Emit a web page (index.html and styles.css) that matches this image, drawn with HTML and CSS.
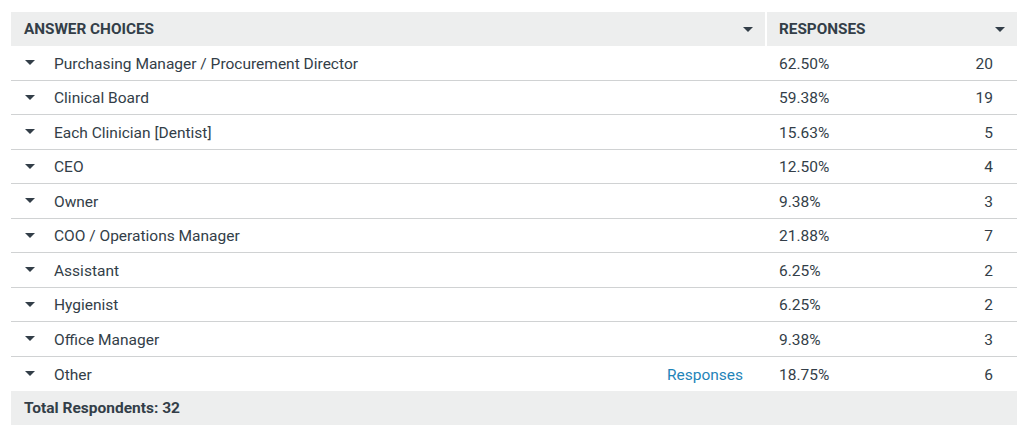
FILE: index.html
```html
<!DOCTYPE html>
<html>
<head>
<meta charset="utf-8">
<link rel="stylesheet" href="styles.css">
</head>
<body>
<div class="tbl">
  <div class="row head">
    <div class="c-choice"><span>ANSWER CHOICES</span><span class="hcaret"></span></div>
    <div class="c-resp"><span>RESPONSES</span><span class="hcaret"></span></div>
  </div>
  <div class="row item"><div class="c-choice"><span class="caret"></span><span class="lbl">Purchasing Manager / Procurement Director</span></div><div class="c-pct">62.50%</div><div class="c-num">20</div></div>
  <div class="row item"><div class="c-choice"><span class="caret"></span><span class="lbl">Clinical Board</span></div><div class="c-pct">59.38%</div><div class="c-num">19</div></div>
  <div class="row item"><div class="c-choice"><span class="caret"></span><span class="lbl">Each Clinician [Dentist]</span></div><div class="c-pct">15.63%</div><div class="c-num">5</div></div>
  <div class="row item"><div class="c-choice"><span class="caret"></span><span class="lbl">CEO</span></div><div class="c-pct">12.50%</div><div class="c-num">4</div></div>
  <div class="row item"><div class="c-choice"><span class="caret"></span><span class="lbl">Owner</span></div><div class="c-pct">9.38%</div><div class="c-num">3</div></div>
  <div class="row item"><div class="c-choice"><span class="caret"></span><span class="lbl">COO / Operations Manager</span></div><div class="c-pct">21.88%</div><div class="c-num">7</div></div>
  <div class="row item"><div class="c-choice"><span class="caret"></span><span class="lbl">Assistant</span></div><div class="c-pct">6.25%</div><div class="c-num">2</div></div>
  <div class="row item"><div class="c-choice"><span class="caret"></span><span class="lbl">Hygienist</span></div><div class="c-pct">6.25%</div><div class="c-num">2</div></div>
  <div class="row item"><div class="c-choice"><span class="caret"></span><span class="lbl">Office Manager</span></div><div class="c-pct">9.38%</div><div class="c-num">3</div></div>
  <div class="row item last"><div class="c-choice"><span class="caret"></span><span class="lbl">Other</span><a class="link">Responses</a></div><div class="c-pct">18.75%</div><div class="c-num">6</div></div>
  <div class="row foot"><div class="total">Total Respondents: 32</div></div>
</div>
</body>
</html>
```
FILE: styles.css
```css
body {
  margin: 0;
  padding: 12px 12px 0 11px;
  background: #fff;
  font-family: Roboto, "Liberation Sans", sans-serif;
  color: #333e48;
}
.tbl {
  width: 1006px;
}
.row {
  display: flex;
  height: 34.5px;
  align-items: center;
  border-bottom: 1px solid #d0d2d3;
  box-sizing: border-box;
  font-size: 15.5px;
}
.item { padding-top: 2px; }
.item .caret { margin-top: -2px; }
.row.last { border-bottom: none; }
.head {
  height: 34px;
  border-bottom: none;
  background: #edeeee;
  font-weight: 700;
  font-size: 15.3px;
  align-items: stretch;
}
.head .c-choice {
  width: 756px;
  padding: 0 12px 0 13px;
  display: flex;
  justify-content: space-between;
  align-items: center;
  box-sizing: border-box;
  border-right: 2px solid #fff;
}
.head .c-resp {
  flex: 1;
  padding: 0 12px 0 12px;
  display: flex;
  justify-content: space-between;
  align-items: center;
}
.hcaret, .caret {
  width: 0;
  height: 0;
  border-left: 5px solid transparent;
  border-right: 5px solid transparent;
  border-top: 5px solid #333e48;
}
.c-choice {
  width: 756px;
  display: flex;
  align-items: center;
  padding-left: 14px;
  padding-right: 24px;
  box-sizing: border-box;
}
.caret { margin-right: 19px; }
.lbl { flex: 1; }
.link { color: #1f84b8; }
.c-pct {
  width: 150px;
  padding-left: 12px;
}
.c-num {
  width: 64px;
  text-align: right;
}
.foot {
  height: 34px;
  background: #edeeee;
  border-bottom: none;
  font-weight: 700;
  font-size: 15.5px;
}
.total { padding-left: 13px; }
```
